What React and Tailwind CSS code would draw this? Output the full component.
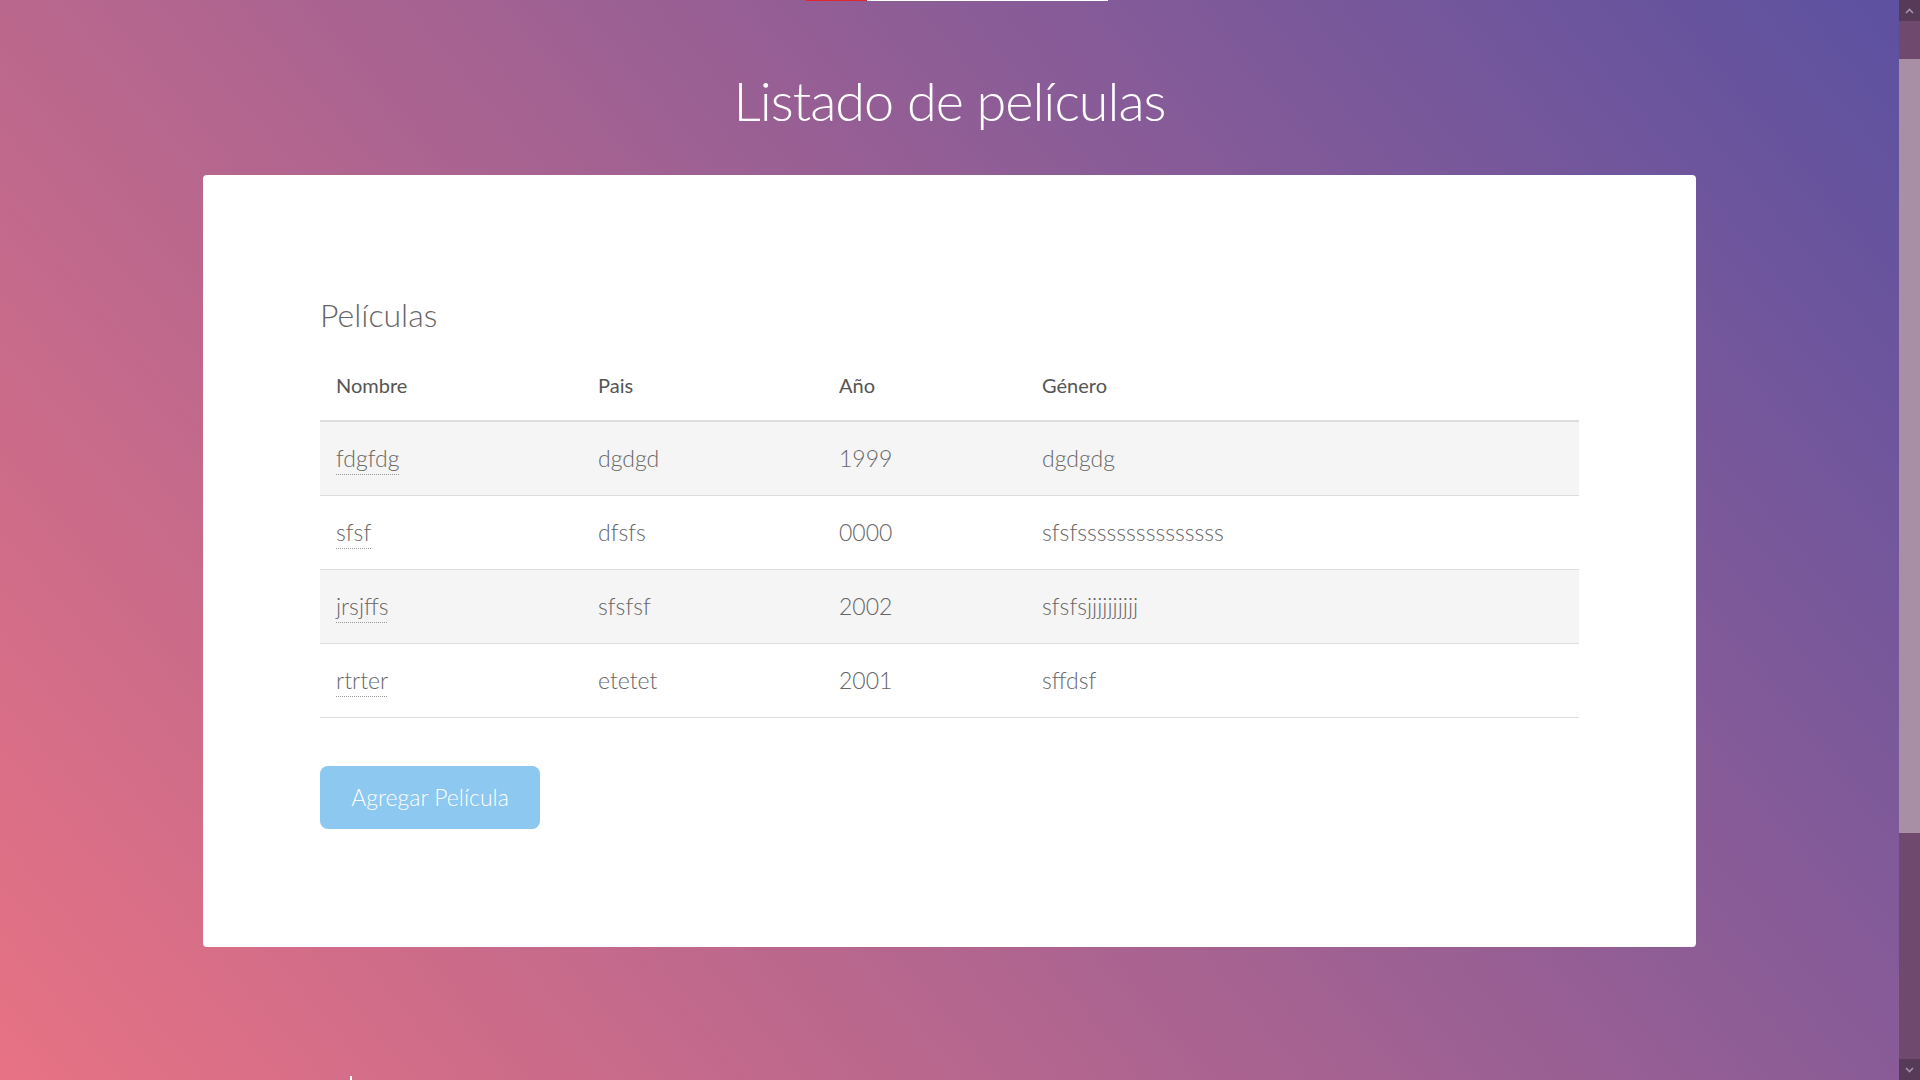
import React from 'react';

const peliculas = [
  { id: 1, nombre: 'fdgfdg', pais: 'dgdgd', anio: '1999', genero: 'dgdgdg' },
  { id: 2, nombre: 'sfsf', pais: 'dfsfs', anio: '0000', genero: 'sfsfsssssssssssssss' },
  { id: 3, nombre: 'jrsjffs', pais: 'sfsfsf', anio: '2002', genero: 'sfsfsjjjjjjjjjj' },
  { id: 4, nombre: 'rtrter', pais: 'etetet', anio: '2001', genero: 'sffdsf' },
];

const ScrollArrow = ({ down }) => (
  <div className="h-[21px] bg-[#563a58] flex items-center justify-center">
    <svg width="9" height="6" viewBox="0 0 9 6" fill="none" stroke="#a892a8" strokeWidth="1.6">
      {down ? <polyline points="1,1 4.5,4.5 8,1" /> : <polyline points="1,5 4.5,1.5 8,5" />}
    </svg>
  </div>
);

const App = () => {
  return (
    <div className="flex h-screen overflow-hidden font-['Lato',sans-serif]">
      <div className="flex-1 overflow-hidden bg-[linear-gradient(50deg,#e77284_0%,#5c51a0_100%)]">
        <div className="flex justify-center pl-[15px]">
          <div className="w-[61px] h-px bg-[#e0262e]"></div>
          <div className="w-[241px] h-px bg-white"></div>
        </div>

        <h1 className="pt-[68px] pb-[42px] text-center text-[54px] leading-[64px] font-light text-white tracking-[-1px]">Listado de películas</h1>

        <div className="mx-auto w-[1493px] rounded-[4px] bg-white px-[117px] pt-[118px] pb-[118px]">
          <h2 className="text-[32px] leading-[44px] font-light text-[#666] mb-[12px]">Películas</h2>
          <table className="w-full border-collapse text-left">
            <thead>
              <tr className="border-b-2 border-[#ddd]">
                <th className="w-[262px] h-[72px] px-4 text-[20px] font-normal text-[#555]">Nombre</th>
                <th className="w-[241px] h-[72px] px-4 text-[20px] font-normal text-[#555]">Pais</th>
                <th className="w-[203px] h-[72px] px-4 text-[20px] font-normal text-[#555]">Año</th>
                <th className="h-[72px] px-4 text-[20px] font-normal text-[#555]">Género</th>
              </tr>
            </thead>
            <tbody>
              {peliculas.map((p, i) => (
                <tr key={p.id} className={`border-b border-[#ddd] ${i % 2 === 0 ? 'bg-[#f5f5f5]' : 'bg-white'}`}>
                  <td className="h-[74px] px-4 text-[23px] font-light text-[#666]">
                    <a href="#" className="underline decoration-dotted decoration-[#999] decoration-1 underline-offset-[7px]">{p.nombre}</a>
                  </td>
                  <td className="h-[74px] px-4 text-[23px] font-light text-[#666]">{p.pais}</td>
                  <td className="h-[74px] px-4 text-[23px] font-light text-[#666]">{p.anio}</td>
                  <td className="h-[74px] px-4 text-[23px] font-light text-[#666]">{p.genero}</td>
                </tr>
              ))}
            </tbody>
          </table>
          <button className="mt-[48px] w-[220px] h-[63px] rounded-[8px] bg-[#8cc8f0] text-[23px] font-light text-white">Agregar Película</button>
        </div>

        <footer className="pt-[129px] pb-[360px] pl-[350px]">
          <div className="w-[2px] h-[24px] bg-white"></div>
        </footer>
      </div>

      <div className="w-[21px] flex flex-col bg-[#6f4a6e]">
        <ScrollArrow />
        <div className="h-[38px]"></div>
        <div className="h-[774px] bg-[#a88fa6]"></div>
        <div className="flex-1"></div>
        <ScrollArrow down />
      </div>
    </div>
  );
};

export default App;
